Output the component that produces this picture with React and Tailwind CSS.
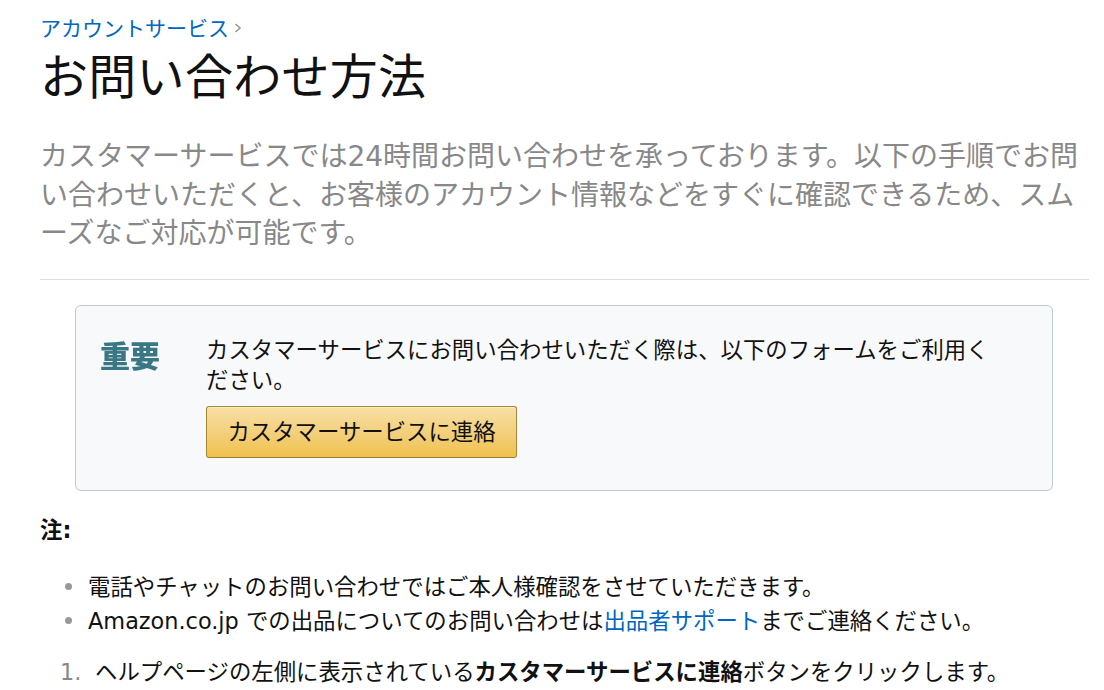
export default function App() {
  const font = { fontFamily: '"DejaVu Sans", "Noto Sans CJK JP", sans-serif' };
  return (
    <div className="w-[1104px] h-[690px] overflow-hidden bg-white text-[#111]" style={font}>
      <div className="ml-[40px] w-[1049px] pt-[13px]">
        <div className="flex items-center text-[21px] leading-[28px]">
          <span className="text-[#0066c0] font-['Noto_Sans_CJK_JP']">アカウントサービス</span>
          <svg width="10" height="14" viewBox="0 0 10 14" className="ml-[4px] mt-[2px]">
            <path d="M2.5 3 L7 7 L2.5 11" fill="none" stroke="#999" strokeWidth="1.6" />
          </svg>
        </div>
        <h1 className="mt-[4px] text-[48px] leading-[56px] font-normal font-['Noto_Sans_CJK_JP'] tracking-[0.3px]">
          お問い合わせ方法
        </h1>
        <p className="mt-[37px] w-[1048px] text-[28px] leading-[38.5px] text-[#888]">
          カスタマーサービスでは24時間お問い合わせを承っております。以下の手順でお問い合わせいただくと、お客様のアカウント情報などをすぐに確認できるため、スムーズなご対応が可能です。
        </p>
        <div className="mt-[25px] h-px bg-[#dddddd]" />
        <div className="mt-[25px] ml-[35px] w-[978px] rounded-[6px] border border-[#bccbd3] bg-[#f8f9fb] pt-[29px] pb-[32px] flex">
          <div className="w-[130px] pl-[24px]">
            <div className="text-[30px] leading-[34px] font-black text-[#3a7785] blur-[0.6px] font-['Noto_Sans_CJK_JP'] mt-[2px]">
              重要
            </div>
          </div>
          <div className="w-[800px] text-[22.4px] leading-[30px]">
            <p>カスタマーサービスにお問い合わせいただく際は、以下のフォームをご利用ください。</p>
            <button className="mt-[11px] h-[52px] w-[311px] rounded-[3px] border border-[#a88734] border-b-[#9c7e31] bg-gradient-to-b from-[#f7dfa5] to-[#f0c14b] text-[22.4px] text-[#111] leading-[30px] shadow-[inset_0_1px_0_rgba(255,255,255,0.4)]">
              カスタマーサービスに連絡
            </button>
          </div>
        </div>
        <div className="mt-[22px] text-[22.4px] leading-[34px] font-bold">注:</div>
        <ul className="mt-[23px] text-[22.4px] leading-[34px]">
          <li className="flex items-center">
            <span className="ml-[25px] mr-[16px] w-[7px] h-[7px] rounded-full bg-[#999]" />
            <span>電話やチャットのお問い合わせではご本人様確認をさせていただきます。</span>
          </li>
          <li className="flex items-center">
            <span className="ml-[25px] mr-[16px] w-[7px] h-[7px] rounded-full bg-[#999]" />
            <span>
              Amazon.co.jp での出品についてのお問い合わせは<span className="text-[#0066c0]">出品者サポート</span>までご連絡ください。
            </span>
          </li>
        </ul>
        <ol className="mt-[17px] text-[22.4px] leading-[34px]">
          <li className="flex">
            <span className="ml-[20px] w-[35px] text-[#888]">1.</span>
            <span>
              ヘルプページの左側に表示されている<b className="font-bold">カスタマーサービスに連絡</b>ボタンをクリックします。
            </span>
          </li>
        </ol>
      </div>
    </div>
  );
}
